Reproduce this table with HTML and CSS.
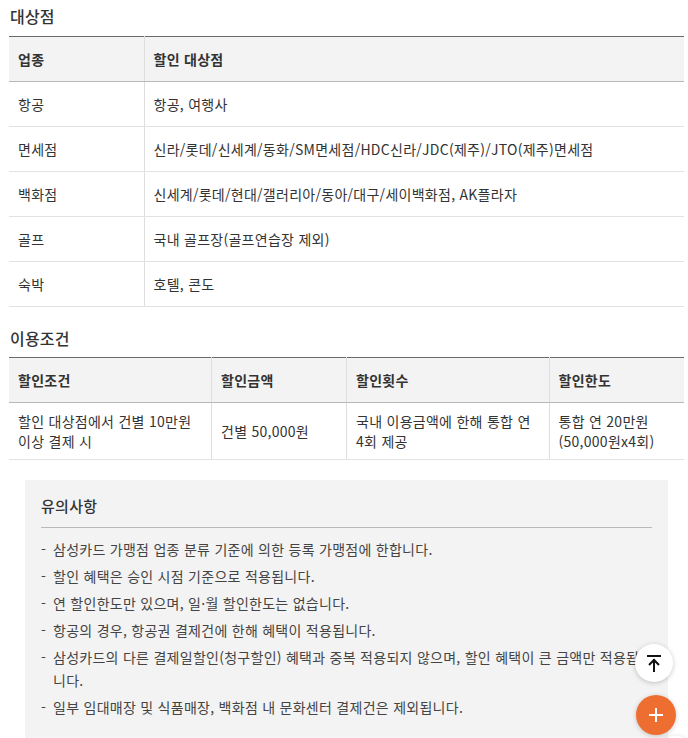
FILE: index.html
```html
<!DOCTYPE html>
<html lang="ko">
<head>
<meta charset="utf-8">
<title>대상점</title>
<link rel="stylesheet" href="styles.css">
</head>
<body>
<div class="page">
  <h3 class="sec-title">대상점</h3>
  <table class="tbl tbl-stores">
    <colgroup><col class="c20"><col></colgroup>
    <thead>
      <tr><th>업종</th><th>할인 대상점</th></tr>
    </thead>
    <tbody>
      <tr><td>항공</td><td>항공, 여행사</td></tr>
      <tr><td>면세점</td><td>신라/롯데/신세계/동화/SM면세점/HDC신라/JDC(제주)/JTO(제주)면세점</td></tr>
      <tr><td>백화점</td><td>신세계/롯데/현대/갤러리아/동아/대구/세이백화점, AK플라자</td></tr>
      <tr><td>골프</td><td>국내 골프장(골프연습장 제외)</td></tr>
      <tr><td>숙박</td><td>호텔, 콘도</td></tr>
    </tbody>
  </table>

  <h3 class="sec-title sec-title-2">이용조건</h3>
  <table class="tbl tbl-cond">
    <colgroup><col class="c30"><col class="c20"><col class="c30"><col class="c20"></colgroup>
    <thead>
      <tr><th>할인조건</th><th>할인금액</th><th>할인횟수</th><th>할인한도</th></tr>
    </thead>
    <tbody>
      <tr>
        <td>할인 대상점에서 건별 10만원 이상 결제 시</td>
        <td>건별 50,000원</td>
        <td>국내 이용금액에 한해 통합 연 4회 제공</td>
        <td>통합 연 20만원<br>(50,000원x4회)</td>
      </tr>
    </tbody>
  </table>

  <div class="notice">
    <h4 class="notice-title">유의사항</h4>
    <ul class="notice-list">
      <li>삼성카드 가맹점 업종 분류 기준에 의한 등록 가맹점에 한합니다.</li>
      <li>할인 혜택은 승인 시점 기준으로 적용됩니다.</li>
      <li>연 할인한도만 있으며, 일·월 할인한도는 없습니다.</li>
      <li>항공의 경우, 항공권 결제건에 한해 혜택이 적용됩니다.</li>
      <li>삼성카드의 다른 결제일할인(청구할인) 혜택과 중복 적용되지 않으며, 할인 혜택이 큰 금액만 적용됩니다.</li>
      <li>일부 임대매장 및 식품매장, 백화점 내 문화센터 결제건은 제외됩니다.</li>
    </ul>
  </div>
</div>

<button class="fab fab-top" aria-label="맨 위로">
  <svg width="16" height="18" viewBox="0 0 16 18" fill="none" stroke="#111" stroke-width="2" stroke-linecap="square">
    <line x1="2" y1="2" x2="14" y2="2"/>
    <line x1="8" y1="6" x2="8" y2="17"/>
    <polyline points="3,11 8,6 13,11" stroke-linecap="butt" stroke-linejoin="miter"/>
  </svg>
</button>
<button class="fab fab-plus" aria-label="메뉴">
  <svg width="16" height="16" viewBox="0 0 16 16" fill="none" stroke="#fff" stroke-width="2">
    <line x1="8" y1="1" x2="8" y2="15"/>
    <line x1="1" y1="8" x2="15" y2="8"/>
  </svg>
</button>
<span class="fab fab-ghost"></span>
</body>
</html>
```

FILE: styles.css
```css
html, body {
  margin: 0;
  padding: 0;
  background: #fff;
}
body {
  font-family: "Noto Sans CJK KR", "Noto Sans", sans-serif;
  color: #333;
  font-size: 14px;
  letter-spacing: 0.27px;
}
.page {
  width: 675px;
  padding-left: 9px;
}
.sec-title {
  margin: 0;
  font-size: 16px;
  font-weight: 500;
  line-height: 22px;
  color: #333;
  padding: 5px 0 9px 1px;
  letter-spacing: 0.2px;
}
.sec-title-2 {
  padding-top: 20px;
  padding-bottom: 8px;
}
.tbl {
  width: 100%;
  border-collapse: collapse;
  table-layout: fixed;
  border-top: 1px solid #6b6b6b;
  word-break: keep-all;
}
.c20 { width: 20%; }
.c30 { width: 30%; }
.tbl th {
  background: #f3f3f3;
  font-weight: 700;
  text-align: left;
  height: 44px;
  padding: 0 9px;
  line-height: 20px;
  border-bottom: 1px solid #b8b8b8;
  color: #333;
}
.tbl th + th,
.tbl td + td {
  border-left: 1px solid #dedede;
}
.tbl td {
  padding: 0 9px;
  line-height: 20px;
  border-bottom: 1px solid #e2e2e2;
  color: #333;
  vertical-align: middle;
}
.tbl-stores td {
  height: 44px;
}
.tbl-cond td {
  padding-top: 8px;
  padding-bottom: 8px;
}
.notice {
  margin: 20px 16px 0;
  background: #f3f3f3;
  padding: 15px 16px 30px;
}
.notice-title {
  margin: 0;
  font-size: 15px;
  font-weight: 500;
  line-height: 22px;
  color: #333;
  padding-bottom: 10px;
  border-bottom: 1px solid #b8b8b8;
}
.notice-list {
  list-style: none;
  margin: 0;
  padding: 10px 0 0;
}
.notice-list li {
  position: relative;
  padding-left: 12px;
  line-height: 23px;
  margin-bottom: 4px;
  color: #444;
}
.notice-list li::before {
  content: "-";
  position: absolute;
  left: 0;
  top: 0;
}
.fab {
  position: fixed;
  border: 0;
  padding: 0;
  border-radius: 50%;
  display: flex;
  align-items: center;
  justify-content: center;
}
.fab-top {
  left: 635px;
  top: 644px;
  width: 38px;
  height: 38px;
  background: #fff;
  box-shadow: 0 1px 5px rgba(0, 0, 0, 0.22);
}
.fab-plus {
  left: 636px;
  top: 695px;
  width: 40px;
  height: 40px;
  background: #ee6d31;
  box-shadow: 0 1px 5px rgba(0, 0, 0, 0.2);
}
.fab-ghost {
  left: 657px;
  top: 736px;
  width: 38px;
  height: 38px;
  background: #fff;
  box-shadow: 0 0 4px rgba(0, 0, 0, 0.12);
}
```
